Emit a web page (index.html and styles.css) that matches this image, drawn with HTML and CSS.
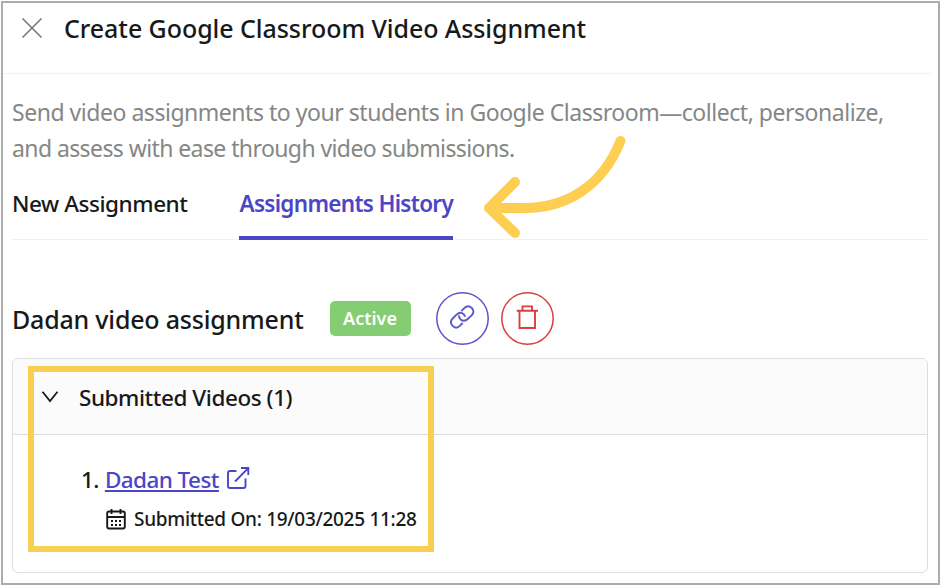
FILE: index.html
```
<!DOCTYPE html>
<html lang="en">
<head>
<meta charset="utf-8">
<title>Create Google Classroom Video Assignment</title>
<link rel="stylesheet" href="styles.css">
</head>
<body>
<main class="frame">
  <header class="header">
    <svg class="close" viewBox="0 0 22 22"><path d="M1.5 1.5 20.5 20.5M20.5 1.5 1.5 20.5"/></svg>
    <h1 class="title">Create Google Classroom Video Assignment</h1>
  </header>
  <section class="content">
    <p class="intro"><span class="line-a">Send video assignments to your students in Google Classroom—collect, personalize,</span><br><span class="line-b">and assess with ease through video submissions.</span></p>
    <nav class="tabs">
      <a class="tab">New Assignment</a>
      <a class="tab tab-active">Assignments History</a>
    </nav>
    <div class="assignment">
      <h2 class="name">Dadan video assignment</h2>
      <span class="badge">Active</span>
      <button class="round link-btn" aria-label="Copy link"><svg viewBox="0 0 53 53"><circle cx="26.500" cy="26.500" r="25.700"/><path d="M25.300 19.200 28.300 16.200C30.700 13.800 33.500 13.800 35.800 16C38 18.200 38 21 35.600 23.400L31.800 27C29.400 29.200 26.600 29.200 24.400 27.200C23.300 26 22.900 24.800 23 23.400M28.800 24.800C28.900 23.800 28.500 23 27.700 22.200C25.600 20.300 22.800 20.500 20.500 22.700L16.700 26.500C14.400 28.900 14.400 31.700 16.600 33.900C18.800 36.100 21.600 36.100 24 33.700L26.700 31"/></svg></button>
      <button class="round delete-btn" aria-label="Delete"><svg viewBox="0 0 53 53"><circle cx="26.500" cy="26.500" r="25.700"/><path d="M15.800 18.700H37M21.500 18.200V14.400H31V18.200M18.500 18.700V36H34V18.700"/></svg></button>
    </div>
    <div class="panel">
      <div class="panel-head">
        <svg class="chevron" viewBox="0 0 18 14"><path d="M1.500 1.800 9 11 16.500 1.800"/></svg>
        <span class="panel-title">Submitted Videos (1)</span>
      </div>
      <div class="panel-body">
        <div class="video"><span class="num">1.</span><a class="video-link">Dadan Test</a><svg class="external" viewBox="0 0 24 24"><path d="M10.500 5H4Q2 5 2 7V20Q2 22 4 22H17.500Q19.500 22 19.500 20V12.500M9 15.500 22 2.300M15 2H22.300V9"/></svg></div>
        <div class="meta"><svg class="calendar" viewBox="0 0 20 22"><path d="M5.500 1V6M14.500 1V6M1.200 9H18.800M3 3.500H17Q18.800 3.500 18.800 5.500V18.500Q18.800 20.500 17 20.500H3Q1.200 20.500 1.200 18.500V5.500Q1.200 3.500 3 3.500Z"/><path class="dots" d="M5 13H15.500M5 17H15.500"/></svg><span class="date">Submitted On: 19/03/2025 11:28</span></div>
      </div>
    </div>
  </section>
  <div class="highlight"></div>
  <svg class="arrow" viewBox="0 0 170 125"><path d="M150.500 16C132 62 96 83 54 83H20M45 57 19 83 45 108"/></svg>
</main>
</body>
</html>
```
FILE: styles.css
```
* { box-sizing: border-box; }
body { margin: 0; background: #fefffe; color: #17191b; font-family: "Noto Sans", "Liberation Sans", sans-serif; }
.frame { position: relative; margin: 1px 2px 0 1px; height: 584px; border: 2px solid #a9adac; overflow: hidden; }
svg { display: block; fill: none; stroke: currentColor; }
.header { display: flex; align-items: center; height: 71px; margin-right: 7px; padding: 0 0 21px 18px; border-bottom: 1px solid #f0f1f0; }
.close { width: 22px; height: 22px; color: #777; stroke-width: 1.6; margin-right: 21px; }
.title { margin: 0; font-size: 25px; line-height: 34px; font-weight: 500; letter-spacing: -0.06px; white-space: nowrap; }
.content { padding: 0 10px 0 9px; }
.intro { margin: 20px 0 0; font-size: 23px; line-height: 36px; color: #858786; white-space: nowrap; }
.line-a { letter-spacing: -0.47px; }
.line-b { letter-spacing: -0.59px; }
.tabs { display: flex; gap: 52px; height: 74px; border-bottom: 1px solid #f0f1f0; }
.tab { height: 74px; padding-top: 21px; font-size: 22.5px; line-height: 34px; font-weight: 500; letter-spacing: -0.44px; white-space: nowrap; }
.tab-active { color: #4b46c6; font-weight: 600; letter-spacing: -0.7px; border-bottom: 4px solid #4b46c6; }
.assignment { display: flex; align-items: center; height: 54px; margin-top: 51px; }
.name { margin: 2px 26px 0 0; font-size: 25px; line-height: 34px; font-weight: 500; letter-spacing: -0.2px; white-space: nowrap; }
.badge { width: 81px; height: 35px; margin-right: 25px; border-radius: 5px; background: #85cd72; color: #fff; font-size: 18px; line-height: 34px; font-weight: 600; text-align: center; }
.round { width: 53px; height: 53px; padding: 0; border: 0; border-radius: 50%; background: transparent; }
.round svg { width: 53px; height: 53px; stroke-width: 1.9; }
.round circle { stroke-width: 1.5; }
.link-btn { color: #5e57cc; margin-right: 12px; }
.delete-btn { color: #d9403f; }
.panel { height: 215px; margin-top: 13px; border: 1px solid #dcdedd; border-radius: 6px; }
.panel-head { display: flex; align-items: center; height: 76px; padding-left: 28px; border-bottom: 1px solid #dcdedd; background: #fafbfa; border-radius: 5px 5px 0 0; }
.chevron { width: 18px; height: 14px; stroke-width: 1.8; margin-right: 20px; }
.panel-title { margin-top: 2px; font-size: 22.5px; font-weight: 500; letter-spacing: -0.44px; }
.panel-body { padding: 26px 0 0 68px; }
.video { display: flex; height: 36px; align-items: center; font-size: 22.5px; font-weight: 500; letter-spacing: -0.56px; }
.video-link { margin-left: 6px; color: #4b46c6; text-decoration: underline; }
.external { width: 24px; height: 24px; margin: -2px 0 0 7px; color: #4b46c6; stroke-width: 1.9; }
.meta { display: flex; align-items: center; height: 43px; padding-left: 25px; font-size: 19px; font-weight: 500; letter-spacing: -0.3px; }
.calendar { width: 20px; height: 22px; margin-right: 8px; stroke-width: 1.9; }
.dots { stroke-dasharray: 2 2; }
.highlight { position: absolute; left: 25px; top: 363px; width: 406px; height: 186px; border: 6px solid #f8cf52; }
.arrow { position: absolute; left: 467px; top: 122px; width: 170px; height: 125px; color: #fdce51; stroke-width: 10; stroke-linecap: round; stroke-linejoin: round; }
```
